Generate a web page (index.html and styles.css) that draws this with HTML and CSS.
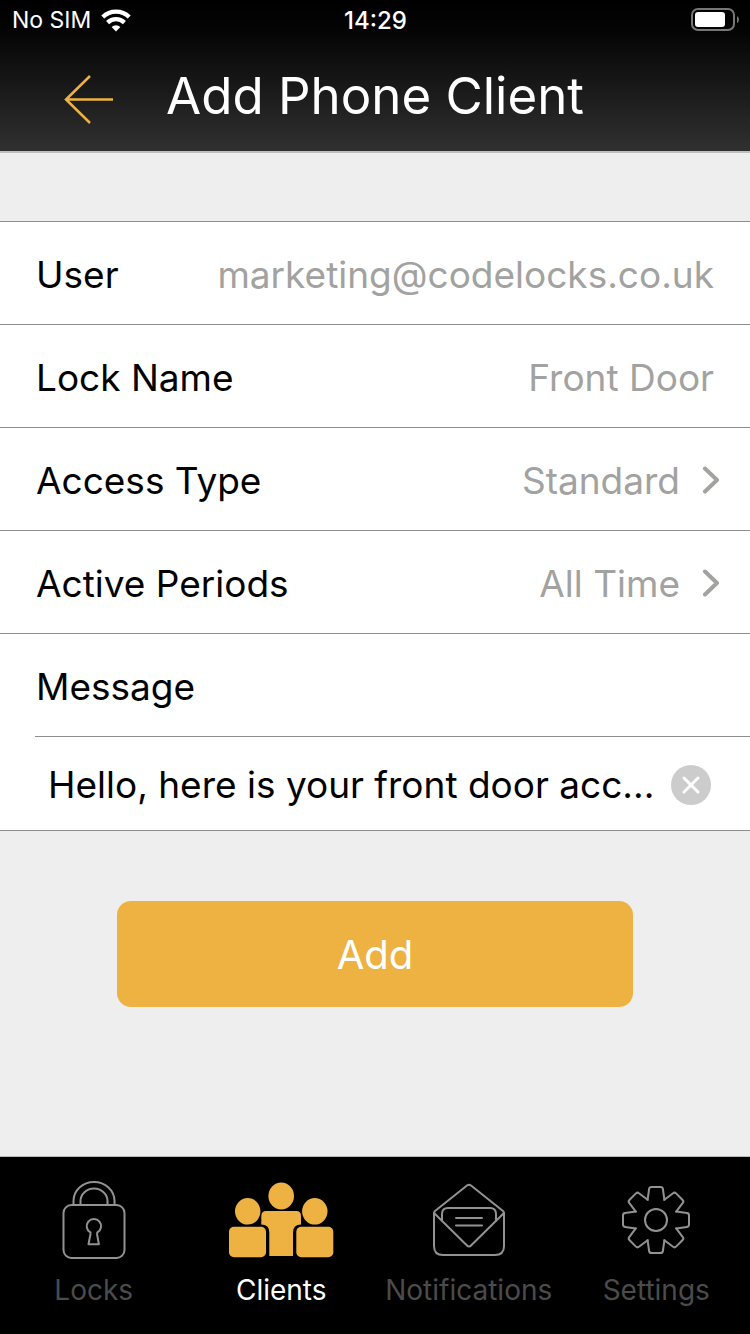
FILE: index.html
```html
<!DOCTYPE html>
<html lang="en">
<head>
<meta charset="utf-8">
<meta name="viewport" content="width=device-width, initial-scale=1">
<title>Add Phone Client</title>
<link rel="stylesheet" href="styles.css">
</head>
<body>
<div class="app">
  <header class="header">
    <div class="status">
      <div class="status-left">
        <span>No SIM</span>
        <svg class="wifi" viewBox="0 0 30 24" width="30" height="24" aria-hidden="true">
          <g fill="none" stroke="#fff" stroke-width="4.4">
            <path d="M1.8 9a19 19 0 0 1 26.4 0"/>
            <path d="M6.6 14.6a12 12 0 0 1 16.8 0"/>
          </g>
          <path d="M15 23.4l-4.4-4.400a6.400 6.400 0 0 1 8.800 0z" fill="#fff"/>
        </svg>
      </div>
      <time class="status-time">14:29</time>
      <svg class="battery" viewBox="0 0 48 24" width="48" height="24" aria-hidden="true">
        <rect x="1" y="1" width="42" height="21" rx="6" fill="none" stroke="#777" stroke-width="2"/>
        <rect x="4" y="4" width="30" height="15" rx="3" fill="#fff"/>
        <path d="M46 8q2 1 2 3.500t-2 3.500z" fill="#777"/>
      </svg>
    </div>
    <div class="nav">
      <button class="back" type="button" aria-label="Back">
        <svg viewBox="0 0 50 50" width="50" height="50" aria-hidden="true">
          <path d="M26 2L2 25.500L26 49M2 25.500H49" fill="none" stroke="#eeb243" stroke-width="2.500"/>
        </svg>
      </button>
      <h1 class="title">Add Phone Client</h1>
    </div>
  </header>

  <main class="content">
    <form class="form">
      <div class="list">
        <div class="row"><span>User</span><span class="value">marketing@codelocks.co.uk</span></div>
        <div class="row"><span>Lock Name</span><span class="value">Front Door</span></div>
        <button class="row row-link" type="button">
          <span>Access Type</span><span class="value">Standard</span>
          <svg class="chevron" viewBox="0 0 18 28" width="18" height="28" aria-hidden="true"><path d="M3 2.500L15 14L3 25.500"/></svg>
        </button>
        <button class="row row-link" type="button">
          <span>Active Periods</span><span class="value">All Time</span>
          <svg class="chevron" viewBox="0 0 18 28" width="18" height="28" aria-hidden="true"><path d="M3 2.500L15 14L3 25.500"/></svg>
        </button>
        <div class="row row-message"><label for="message">Message</label></div>
        <div class="message">
          <input class="message-input" id="message" type="text" value="Hello, here is your front door acc...">
          <button class="clear" type="button" aria-label="Clear message">
            <svg viewBox="0 0 40 40" width="40" height="40" aria-hidden="true">
              <circle cx="20" cy="20" r="20" fill="#ccc"/>
              <path d="M13 13l14 14m0-14l-14 14" stroke="#fff" stroke-width="3" stroke-linecap="round"/>
            </svg>
          </button>
        </div>
      </div>
      <button class="add" type="button">Add</button>
    </form>
  </main>

  <nav class="tabs">
    <a class="tab" href="#locks">
      <svg class="tab-icon" viewBox="0 0 110 80" width="110" height="80" aria-hidden="true">
        <rect x="24.500" y="25" width="61" height="53" rx="8"/>
        <path d="M34.500 25v-4a20.500 19 0 0 1 41 0v4M41.500 25v-4a13.500 12.500 0 0 1 27 0v4"/>
        <path d="M51.500 52.500a7.200 7.200 0 1 1 6.800 0l-.2 2 1.800 9.800H49.500l1.900-9.800z"/>
      </svg>
      <span>Locks</span>
    </a>
    <a class="tab tab-active" href="#clients" aria-current="page">
      <svg class="tab-icon" viewBox="0 0 110 80" width="110" height="80" aria-hidden="true">
        <ellipse cx="55.200" cy="16" rx="12.800" ry="13.500"/>
        <ellipse cx="21.700" cy="31.300" rx="12.700" ry="13.300"/>
        <ellipse cx="88.800" cy="31.300" rx="12.700" ry="13.300"/>
        <rect x="3" y="46.700" width="37" height="30.600" rx="5"/>
        <rect x="70.300" y="46.700" width="37" height="30.600" rx="5"/>
        <path d="M40.300 31H70q5 0 5 5v8.500q-8 0-8 8V76H43.300V52.500q0-8-8-8V36q0-5 5-5z"/>
      </svg>
      <span>Clients</span>
    </a>
    <a class="tab" href="#notifications">
      <svg class="tab-icon" viewBox="0 0 110 80" width="110" height="80" aria-hidden="true">
        <path d="M20 33v33q0 9 9 9h52q9 0 9-9V33"/>
        <path d="M21 31L53 5.500q2-1.500 4 0L89 31q1.500 1.200.2 2.800L57 65.500q-2 2-4 0L20.800 33.800q-1.300-1.600.2-2.800z"/>
        <path d="M28 40.500V34q0-6 6-6h42q6 0 6 6v6.500M42 38h26M42 45.500h26"/>
      </svg>
      <span>Notifications</span>
    </a>
    <a class="tab" href="#settings">
      <svg class="tab-icon" viewBox="0 0 110 80" width="110" height="80" aria-hidden="true">
        <defs><path id="tooth" d="M-8.400 -20.200L-6.900 -31q.3-2 2.300-2h9.200q2 0 2.300 2L8.400 -20.200"/></defs>
        <g transform="translate(55 40)">
          <circle r="11"/>
          <use href="#tooth"/>
          <use href="#tooth" transform="rotate(45)"/>
          <use href="#tooth" transform="rotate(90)"/>
          <use href="#tooth" transform="rotate(135)"/>
          <use href="#tooth" transform="rotate(180)"/>
          <use href="#tooth" transform="rotate(225)"/>
          <use href="#tooth" transform="rotate(270)"/>
          <use href="#tooth" transform="rotate(315)"/>
        </g>
      </svg>
      <span>Settings</span>
    </a>
  </nav>
</div>
</body>
</html>
```
FILE: styles.css
```css
* {
  box-sizing: border-box;
}

body {
  margin: 0;
  background: #eee;
  color: #000;
  font-family: Inter, Roboto, "Liberation Sans", sans-serif;
}

button {
  margin: 0;
  padding: 0;
  border: 0;
  background: none;
  color: inherit;
  font: inherit;
  cursor: pointer;
}

svg {
  display: block;
  flex: none;
}

.app {
  display: flex;
  flex-direction: column;
  min-height: 100vh;
}

.header {
  border-bottom: 2px solid #c0c0c0;
  background: linear-gradient(#000, #040404 20%, #303030);
  color: #fff;
}

.status {
  display: grid;
  grid-template-columns: 1fr auto 1fr;
  align-items: center;
  height: 40px;
  padding: 0 11px 0 12px;
  font-size: 24px;
}

.status-left {
  display: flex;
  align-items: center;
  gap: 10px;
  font-size: 23px;
}

.status-time {
  font-weight: 500;
}

.battery {
  justify-self: end;
}

.nav {
  display: grid;
  grid-template-columns: 1fr auto 1fr;
  align-items: center;
  height: 111px;
  padding: 0 64px;
}

.back {
  justify-self: start;
  padding-top: 6px;
}

.title {
  margin: 0;
  font-size: 51px;
  font-weight: 400;
  line-height: 60px;
}

.content {
  flex: 1;
  padding-top: 68px;
}

.list {
  border-top: 1px solid #8e8e8e;
  border-bottom: 1px solid #8e8e8e;
  background: #fff;
  font-size: 37px;
}

.row {
  display: flex;
  align-items: center;
  gap: 22px;
  width: 100%;
  height: 103px;
  padding: 2px 36px 0;
  border-bottom: 1px solid #8e8e8e;
  text-align: left;
}

.row-link {
  padding-right: 30px;
}

.row-message {
  width: auto;
  margin-left: 35px;
  padding-left: 1px;
}

.value {
  margin-left: auto;
  color: #a2a2a0;
}

.chevron {
  fill: none;
  stroke: #a2a2a0;
  stroke-width: 4;
  stroke-linecap: round;
  stroke-linejoin: round;
}

.message {
  display: flex;
  align-items: center;
  gap: 8px;
  height: 93px;
  padding: 2px 39px 0 48px;
}

.message-input {
  flex: 1;
  min-width: 0;
  padding: 0;
  border: 0;
  outline: 0;
  background: none;
  color: inherit;
  font: inherit;
  text-overflow: ellipsis;
}

.add {
  display: block;
  width: 516px;
  max-width: calc(100% - 72px);
  height: 106px;
  margin: 70px auto;
  border-radius: 14px;
  background: #eeb243;
  color: #fff;
  font-size: 40px;
}

.tabs {
  display: grid;
  grid-template-columns: repeat(4, 1fr);
  height: 178px;
  padding-top: 23px;
  border-top: 1px solid #b8bcbc;
  background: #000;
}

.tab {
  display: flex;
  flex-direction: column;
  align-items: center;
  gap: 14px;
  color: #4b4b4b;
  font-size: 28px;
  line-height: 32px;
  text-decoration: none;
}

.tab-icon {
  fill: none;
  stroke: #929292;
  stroke-width: 2;
  stroke-linecap: round;
  stroke-linejoin: round;
}

.tab-active {
  color: #fff;
}

.tab-active .tab-icon {
  fill: #eeb243;
  stroke: none;
}
```
